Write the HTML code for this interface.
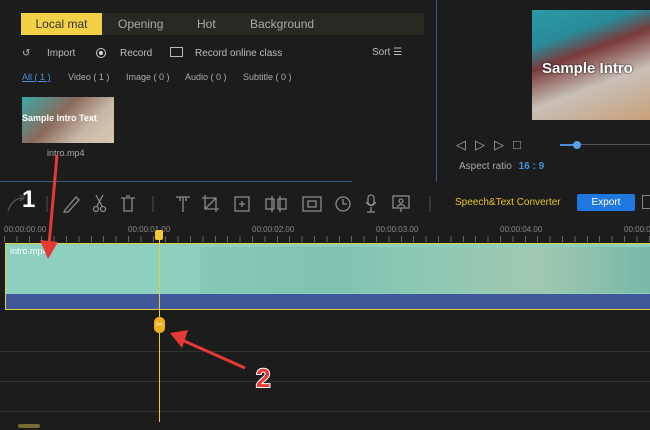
<!DOCTYPE html><html><head><style>
body{margin:0;width:650px;height:430px;background:#1c1c1c;font-family:"Liberation Sans",sans-serif;position:relative;overflow:hidden;color:#bbb}
.a{position:absolute}
.t{font-size:10px;color:#bdbdbd}
</style></head><body>
<div class="a" style="left:436px;top:0;width:1px;height:182px;background:#3a5a80"></div>
<div class="a" style="left:0;top:181px;width:352px;height:1px;background:#3a5a80"></div>
<div class="a" style="left:21px;top:13px;width:403px;height:22px;background:#2a2822"></div>
<div class="a" style="left:21px;top:13px;width:81px;height:22px;background:#f3d147;color:#333;font-size:12px;line-height:22px;text-align:center">Local mat</div>
<div class="a" style="left:118px;top:17px;font-size:12px;color:#aaa">Opening</div>
<div class="a" style="left:197px;top:17px;font-size:12px;color:#aaa">Hot</div>
<div class="a" style="left:250px;top:17px;font-size:12px;color:#aaa">Background</div>
<div class="a t" style="left:22px;top:48px">↺</div>
<div class="a t" style="left:47px;top:48px">Import</div>
<div class="a" style="left:96px;top:48px;width:10px;height:10px;border:1px solid #ccc;border-radius:50%;box-sizing:border-box;padding:2px"><div style="width:4px;height:4px;background:#ddd;border-radius:50%"></div></div>
<div class="a t" style="left:120px;top:48px">Record</div>
<div class="a" style="left:170px;top:47px;width:11px;height:8px;border:1px solid #bbb"></div>
<div class="a t" style="left:195px;top:48px">Record online class</div>
<div class="a t" style="left:372px;top:47px">Sort ☰</div>
<div class="a" style="left:22px;top:72px;font-size:9px;color:#4a90d9;text-decoration:underline">All ( 1 )</div>
<div class="a" style="left:68px;top:72px;font-size:9px;color:#aaa">Video ( 1 )</div>
<div class="a" style="left:126px;top:72px;font-size:9px;color:#aaa">Image ( 0 )</div>
<div class="a" style="left:185px;top:72px;font-size:9px;color:#aaa">Audio ( 0 )</div>
<div class="a" style="left:243px;top:72px;font-size:9px;color:#aaa">Subtitle ( 0 )</div>
<div class="a" style="left:22px;top:97px;width:92px;height:46px;background:linear-gradient(135deg,#3aa8a8,#8a6a5a 40%,#c8b8a8 70%,#d8c8b0)"><div style="color:#fff;font-size:9px;font-weight:bold;margin-top:16px">Sample Intro Text</div></div>
<div class="a" style="left:47px;top:148px;font-size:9px;color:#aaa">intro.mp4</div>
<div class="a" style="left:532px;top:10px;width:118px;height:110px;background:linear-gradient(160deg,#2a9aa8 0%,#2a8a98 25%,#7a3a3a 40%,#c8c0b8 65%,#c8a078 100%)"><div style="color:#fff;font-weight:bold;font-size:15px;margin-top:50px;margin-left:10px;white-space:nowrap;text-shadow:0 0 2px #000">Sample Intro</div></div>
<div class="a" style="left:456px;top:137px;font-size:13px;color:#aaa;letter-spacing:9px">◁▷▷□</div>
<div class="a" style="left:560px;top:144px;width:90px;height:1px;background:#555"></div>
<div class="a" style="left:560px;top:144px;width:16px;height:2px;background:#4a90d9"></div>
<div class="a" style="left:573px;top:141px;width:8px;height:8px;border-radius:50%;background:#5aa0e8"></div>
<div class="a" style="left:459px;top:161px;font-size:10px;color:#aaa">Aspect ratio <span style="color:#4a90d9;font-weight:bold;margin-left:4px">16 : 9</span></div>
<!-- toolbar icons -->
<svg class="a" style="left:0;top:184px" width="440" height="34" fill="none" stroke="#8a8a8a" stroke-width="1.3">
<path d="M8 27 Q12 14 24 14 M20 11 L24 14 L20 17" stroke="#555"/>
<line x1="47" y1="12" x2="47" y2="28" stroke="#444"/>
<path d="M65 26 L76 13 L79 16 L68 28 L64 28 Z"/>
<circle cx="96" cy="25" r="2.5"/><circle cx="103" cy="25" r="2.5"/><path d="M97 22 L103 11 M102 22 L96 11"/>
<path d="M121 14 H135 M124 14 V27 H132 V14 M126 12 H130"/>
<line x1="153" y1="12" x2="153" y2="28" stroke="#444"/>
<path d="M176 13 H190 M183 13 V28 M180 13 V17 M186 13 V17"/>
<path d="M205 11 V25 H219 M202 14 H216 V28 M205 25 L216 14"/>
<rect x="235" y="13" width="14" height="14"/><path d="M242 17 V23 M239 20 H245"/>
<rect x="266" y="15" width="8" height="10"/><rect x="278" y="15" width="8" height="10"/><path d="M272 12 V28 M280 12 V28"/>
<rect x="303" y="13" width="18" height="14"/><rect x="308" y="17" width="8" height="6"/>
<circle cx="343" cy="20" r="7"/><path d="M343 15 V20 H347"/>
<rect x="368" y="11" width="6" height="10" rx="3"/><path d="M366 18 Q371 25 376 18 M371 23 V28 M367 28 H375"/>
<rect x="393" y="12" width="16" height="12"/><circle cx="401" cy="17" r="2"/><path d="M397 23 Q401 18 405 23 M401 24 V28"/>
<line x1="430" y1="12" x2="430" y2="28" stroke="#444"/>
</svg>
<div class="a" style="left:455px;top:197px;font-size:10px;color:#e8c22a">Speech&amp;Text Converter</div>
<div class="a" style="left:577px;top:194px;width:58px;height:17px;background:#1e78e0;border-radius:2px;color:#fff;font-size:10px;line-height:17px;text-align:center">Export</div>
<div class="a" style="left:642px;top:195px;width:8px;height:12px;border:1px solid #888;border-right:none"></div>
<div class="a" style="left:4px;top:225px;font-size:8px;color:#888;width:650px"><span style="position:absolute;left:0">00:00:00.00</span><span style="position:absolute;left:124px">00:00:01.00</span><span style="position:absolute;left:248px">00:00:02.00</span><span style="position:absolute;left:372px">00:00:03.00</span><span style="position:absolute;left:496px">00:00:04.00</span><span style="position:absolute;left:620px">00:00:0</span></div>
<div class="a" style="left:4px;top:236px;width:646px;height:6px;background:repeating-linear-gradient(90deg,#666 0 1px,transparent 1px 12.4px)"></div>
<div class="a" style="left:5px;top:243px;width:650px;height:67px;background:#e0d040"></div>
<div class="a" style="left:6px;top:244px;width:650px;height:50px;background:#8ed0c0"></div>
<div class="a" style="left:200px;top:247px;width:450px;height:46px;background:linear-gradient(90deg,#86c8b8 0,#7fc2b2 30%,#8ec8b4 50%,#a0c8b0 75%,#7ab8a8)"></div>
<div class="a" style="left:6px;top:294px;width:650px;height:15px;background:#40579a"></div>
<div class="a" style="left:10px;top:246px;font-size:9px;color:#fff">intro.mp4</div>
<div class="a" style="left:0;top:351px;width:650px;height:1px;background:#333"></div>
<div class="a" style="left:0;top:381px;width:650px;height:1px;background:#333"></div>
<div class="a" style="left:0;top:411px;width:650px;height:1px;background:#333"></div>
<div class="a" style="left:18px;top:424px;width:22px;height:4px;border-radius:2px;background:#7a6a30"></div>
<div class="a" style="left:159px;top:236px;width:1px;height:186px;background:#e8c840"></div>
<div class="a" style="left:155px;top:230px;width:8px;height:10px;background:#f3c830;border-radius:2px"></div>
<div class="a" style="left:154px;top:317px;width:11px;height:16px;background:#f0b020;border-radius:5px;font-size:8px;color:#fff;text-align:center;line-height:16px">✂</div>
<svg class="a" style="left:0;top:0" width="650" height="430">
<line x1="57" y1="155" x2="49" y2="245" stroke="#e53935" stroke-width="3"/>
<polygon points="40,240 58,242 48,259" fill="#e53935"/>
<line x1="245" y1="368" x2="182" y2="340" stroke="#e53935" stroke-width="3"/>
<polygon points="170,333 188,330 182,348" fill="#e53935"/>
<text x="22" y="207" font-family="Liberation Sans" font-weight="bold" font-size="24" fill="#fff" stroke="#222" stroke-width="2" paint-order="stroke">1</text>
<text x="256" y="387" font-family="Liberation Sans" font-weight="bold" font-size="26" fill="#e53935" stroke="#fff" stroke-width="2" paint-order="stroke">2</text>
</svg>
</body></html>
